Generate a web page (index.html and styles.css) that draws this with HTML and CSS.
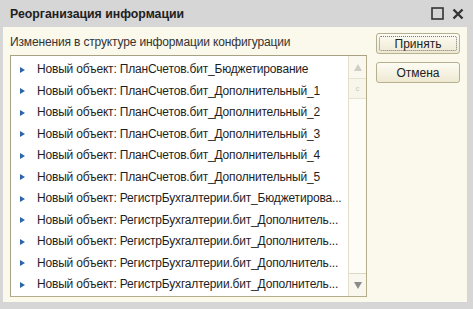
FILE: index.html
```html
<!DOCTYPE html>
<html lang="ru">
<head>
  <meta charset="UTF-8">
  <title>Реорганизация информации</title>
  <link rel="stylesheet" href="styles.css">
</head>
<body>
  <div class="window">
    <div class="titlebar">
      <span class="title">Реорганизация информации</span>
      <span class="tb-icons">
        <svg width="13" height="13" viewBox="0 0 13 13"><rect x="1" y="1" width="11" height="11" fill="none" stroke="#333" stroke-width="1.6"/></svg>
        <svg width="12" height="12" viewBox="0 0 12 12"><path d="M1.5 1.5 L10.5 10.5 M10.5 1.5 L1.5 10.5" stroke="#333" stroke-width="2.4"/></svg>
      </span>
    </div>

    <div class="content">
      <div class="main">
        <div class="label">Изменения в структуре информации конфигурации</div>
        <div class="listbox">
          <ul class="items">
            <li><span class="arrow"></span>Новый объект: ПланСчетов.бит_Бюджетирование</li>
            <li><span class="arrow"></span>Новый объект: ПланСчетов.бит_Дополнительный_1</li>
            <li><span class="arrow"></span>Новый объект: ПланСчетов.бит_Дополнительный_2</li>
            <li><span class="arrow"></span>Новый объект: ПланСчетов.бит_Дополнительный_3</li>
            <li><span class="arrow"></span>Новый объект: ПланСчетов.бит_Дополнительный_4</li>
            <li><span class="arrow"></span>Новый объект: ПланСчетов.бит_Дополнительный_5</li>
            <li><span class="arrow"></span>Новый объект: РегистрБухгалтерии.бит_Бюджетирова...</li>
            <li><span class="arrow"></span>Новый объект: РегистрБухгалтерии.бит_Дополнитель...</li>
            <li><span class="arrow"></span>Новый объект: РегистрБухгалтерии.бит_Дополнитель...</li>
            <li><span class="arrow"></span>Новый объект: РегистрБухгалтерии.бит_Дополнитель...</li>
            <li><span class="arrow"></span>Новый объект: РегистрБухгалтерии.бит_Дополнитель...</li>
          </ul>
          <div class="scrollbar">
            <div class="sb-btn"><span class="tri-up"></span></div>
            <div class="sb-thumb"><span class="grip">c</span></div>
            <div class="sb-track"></div>
            <div class="sb-btn"><span class="tri-down"></span></div>
          </div>
        </div>
      </div>

      <div class="buttons">
        <button class="btn default"><span>Принять</span></button>
        <button class="btn">Отмена</button>
      </div>
    </div>
  </div>
</body>
</html>
```

FILE: styles.css
```css
body {
  margin: 0;
  font-family: 'Liberation Sans', Arial, sans-serif;
  font-size: 12px;
  color: #1e1e1e;
}

.window {
  width: 473px;
  height: 309px;
  box-sizing: border-box;
  background: #d6d6d6;
  padding: 0 6px 7px 3px;
  display: flex;
  flex-direction: column;
}

.titlebar {
  height: 27px;
  display: flex;
  align-items: center;
  padding-left: 7px;
  flex-shrink: 0;
}

.title {
  font-weight: bold;
  font-size: 12.3px;
  color: #202020;
  flex: 1;
}

.tb-icons {
  display: flex;
  align-items: center;
  gap: 8px;
  margin-right: 3px;
}

.tb-icons svg {
  display: block;
}

.content {
  flex: 1;
  background: #fbf8ec;
  display: flex;
  padding: 0 0 5px 7px;
  min-height: 0;
}

.main {
  display: flex;
  flex-direction: column;
  width: 357px;
}

.label {
  margin-top: 8px;
  height: 14px;
  line-height: 14px;
  color: #333;
  letter-spacing: -0.15px;
}

.listbox {
  flex: 1;
  margin-top: 6px;
  border: 1px solid #b3ad8c;
  border-top-color: #a8a285;
  border-left-color: #a8a285;
  background: #fff;
  display: flex;
  min-height: 0;
}

.items {
  list-style: none;
  margin: 0;
  padding: 3px 0 0 0;
  flex: 1;
  letter-spacing: -0.18px;
}

.items li {
  height: 21.5px;
  line-height: 21.5px;
  display: flex;
  align-items: center;
  white-space: nowrap;
  overflow: hidden;
}

.arrow {
  width: 0;
  height: 0;
  border-top: 3.5px solid transparent;
  border-bottom: 3.5px solid transparent;
  border-left: 5px solid #2b66a8;
  margin: 0 12px 0 9px;
}

.scrollbar {
  width: 17px;
  border-left: 1px solid #e4dfca;
  display: flex;
  flex-direction: column;
  background: #fdfcf7;
}

.sb-btn {
  height: 22px;
  display: flex;
  align-items: center;
  justify-content: center;
  background: #faf8ee;
  border-bottom: 1px solid #e8e3cf;
}

.sb-btn:last-child {
  border-bottom: 0;
  border-top: 1px solid #ddd8c2;
}

.sb-thumb {
  height: 19px;
  background: #f8f6ea;
  border-bottom: 1px solid #e8e3cf;
  display: flex;
  align-items: center;
  justify-content: center;
}

.grip {
  font-size: 8px;
  color: #cdc8b3;
}

.sb-track {
  flex: 1;
}

.tri-up {
  width: 0;
  height: 0;
  border-left: 4px solid transparent;
  border-right: 4px solid transparent;
  border-bottom: 7px solid #d0cdc2;
}

.tri-down {
  width: 0;
  height: 0;
  border-left: 4px solid transparent;
  border-right: 4px solid transparent;
  border-top: 7px solid #8b8b8b;
}

.buttons {
  display: flex;
  flex-direction: column;
  margin-left: 9px;
  padding-top: 6px;
  gap: 8px;
}

.btn {
  width: 84px;
  height: 21px;
  padding: 0;
  border: 1px solid #b5b090;
  border-radius: 3px;
  background: linear-gradient(#fdfcf4, #efe9d2);
  font-family: 'Liberation Sans', Arial, sans-serif;
  font-size: 12px;
  color: #222;
  display: flex;
  align-items: center;
  justify-content: center;
}

.btn.default {
  padding: 2px;
}

.btn.default span {
  flex: 1;
  align-self: stretch;
  display: flex;
  align-items: center;
  justify-content: center;
  border: 1px dotted #777;
  border-radius: 2px;
}
```
